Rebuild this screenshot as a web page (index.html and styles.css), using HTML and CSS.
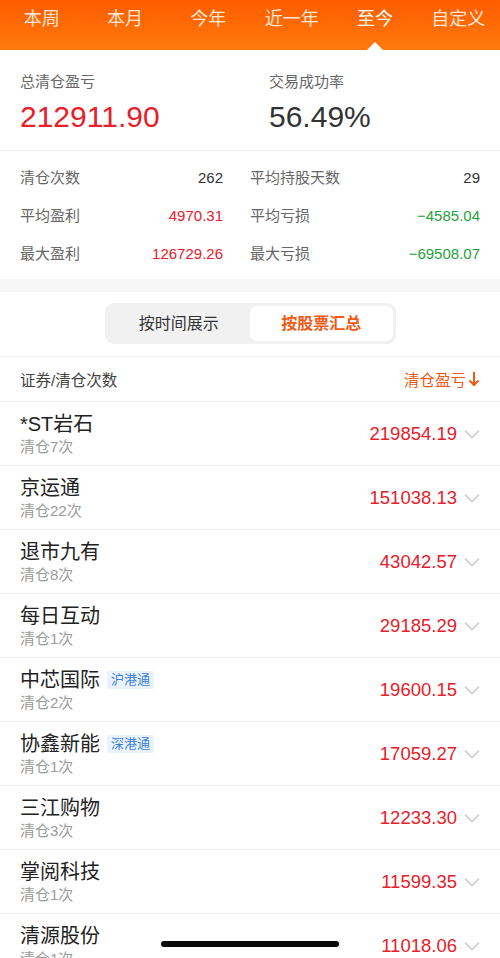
FILE: index.html
```html
<!DOCTYPE html>
<html lang="zh">
<head>
  <meta charset="UTF-8">
  <title>清仓盈亏</title>
  <link rel="stylesheet" href="styles.css">
</head>
<body>
  <nav class="tabs">
    <span class="tab">本周</span>
    <span class="tab">本月</span>
    <span class="tab">今年</span>
    <span class="tab">近一年</span>
    <span class="tab actif">至今</span>
    <span class="tab">自定义</span>
  </nav>

  <section class="resume">
    <div class="bloc">
      <div class="etiquette">总清仓盈亏</div>
      <div class="grand rouge">212911.90</div>
    </div>
    <div class="bloc">
      <div class="etiquette">交易成功率</div>
      <div class="grand">56.49%</div>
    </div>
  </section>

  <section class="stats">
    <span class="lib">清仓次数</span><span class="val">262</span>
    <span class="lib">平均持股天数</span><span class="val">29</span>
    <span class="lib">平均盈利</span><span class="val rouge">4970.31</span>
    <span class="lib">平均亏损</span><span class="val vert">−4585.04</span>
    <span class="lib">最大盈利</span><span class="val rouge">126729.26</span>
    <span class="lib">最大亏损</span><span class="val vert">−69508.07</span>
  </section>

  <div class="separation"></div>

  <div class="segment-zone">
    <div class="segment">
      <span class="seg">按时间展示</span>
      <span class="seg actif">按股票汇总</span>
    </div>
  </div>

  <div class="entete">
    <span>证券/清仓次数</span>
    <span class="tri">清仓盈亏<svg width="12" height="16" viewBox="0 0 12 16"><path d="M6 1v13M1.5 9.5L6 14l4.5-4.5" fill="none" stroke="#f05a14" stroke-width="2"/></svg></span>
  </div>

  <ul id="liste" class="liste"></ul>

  <div class="indicateur"></div>

  <script>
    const actions = [
      { nom: "*ST岩石", fois: 7, pl: "219854.19" },
      { nom: "京运通", fois: 22, pl: "151038.13" },
      { nom: "退市九有", fois: 8, pl: "43042.57" },
      { nom: "每日互动", fois: 1, pl: "29185.29" },
      { nom: "中芯国际", fois: 2, pl: "19600.15", badge: "沪港通" },
      { nom: "协鑫新能", fois: 1, pl: "17059.27", badge: "深港通" },
      { nom: "三江购物", fois: 3, pl: "12233.30" },
      { nom: "掌阅科技", fois: 1, pl: "11599.35" },
      { nom: "清源股份", fois: 1, pl: "11018.06" }
    ];

    const liste = document.getElementById("liste");
    actions.forEach(a => {
      const badge = a.badge ? `<span class="badge">${a.badge}</span>` : "";
      liste.innerHTML += `
        <li class="ligne">
          <div class="gauche">
            <div class="nom">${a.nom}${badge}</div>
            <div class="fois">清仓${a.fois}次</div>
          </div>
          <div class="droite">
            <span class="pl">${a.pl}</span>
            <svg class="chevron" width="16" height="10" viewBox="0 0 16 10"><path d="M1 1.5l7 7 7-7" fill="none" stroke="#c8c8c8" stroke-width="1.4"/></svg>
          </div>
        </li>
      `;
    });
  </script>
</body>
</html>
```

FILE: styles.css
```css
body {
  margin: 0;
  height: 958px;
  overflow: hidden;
  background: #fff;
  color: #333;
  font-family: 'Liberation Sans', 'Noto Sans CJK SC', sans-serif;
}
.rouge { color: #e8202a; }
.vert { color: #1fa33a; }

.tabs {
  display: grid;
  grid-template-columns: repeat(6, 1fr);
  height: 50px;
  background: linear-gradient(180deg, #ff5c00, #ff7a0c);
}
.tab {
  position: relative;
  text-align: center;
  color: #ffe6d4;
  font-size: 18px;
  line-height: 38px;
}
.tab.actif { color: #fff; }
.tab.actif::after {
  content: "";
  position: absolute;
  left: 50%;
  bottom: 0;
  margin-left: -8px;
  border: 8px solid transparent;
  border-bottom-color: #fff;
  border-top-width: 0;
}

.resume {
  display: grid;
  grid-template-columns: 249px 1fr;
  padding: 21px 20px 0;
  height: 79px;
  border-bottom: 1px solid #eee;
}
.etiquette {
  font-size: 15px;
  color: #666;
  line-height: 22px;
}
.grand {
  font-size: 30px;
  line-height: 36px;
  margin-top: 6px;
}

.stats {
  display: grid;
  grid-template-columns: 120px 83px 157px 100px;
  padding: 8px 20px 6px;
  font-size: 15px;
  line-height: 38px;
}
.stats .lib { color: #666; white-space: nowrap; }
.stats .val { text-align: right; }
.stats .lib:nth-child(4n+3) { padding-left: 27px; }

.separation {
  height: 13px;
  background: #f6f6f6;
}

.segment-zone {
  display: flex;
  justify-content: center;
  padding: 11px 0 12px;
  border-bottom: 1px solid #f0f0f0;
}
.segment {
  display: flex;
  width: 285px;
  padding: 3px;
  background: #f1f1f1;
  border-radius: 9px;
}
.seg {
  flex: 1;
  text-align: center;
  font-size: 16px;
  line-height: 35px;
  color: #333;
}
.seg.actif {
  background: #fff;
  border-radius: 7px;
  color: #f05a14;
  font-weight: bold;
}

.entete {
  display: flex;
  justify-content: space-between;
  align-items: center;
  height: 44px;
  padding: 0 20px;
  font-size: 15.5px;
  color: #444;
  border-bottom: 1px solid #f0f0f0;
}
.entete .tri {
  display: flex;
  align-items: center;
  gap: 2px;
  color: #f05a14;
}

.liste {
  list-style: none;
  margin: 0;
  padding: 0;
}
.ligne {
  display: flex;
  justify-content: space-between;
  align-items: center;
  height: 63px;
  padding: 0 20px;
  border-bottom: 1px solid #f0f0f0;
}
.nom {
  display: flex;
  align-items: center;
  font-size: 20px;
  line-height: 26px;
  color: #222;
}
.fois {
  font-size: 15px;
  line-height: 20px;
  color: #999;
}
.badge {
  margin-left: 7px;
  padding: 0 4px;
  font-size: 13px;
  line-height: 18px;
  color: #3a7fd8;
  background: #eaf3fd;
  border-radius: 2px;
}
.droite {
  display: flex;
  align-items: center;
  gap: 7px;
}
.pl {
  font-size: 18.5px;
  color: #e8202a;
}

.indicateur {
  position: fixed;
  left: 161px;
  bottom: 11px;
  width: 178px;
  height: 6px;
  border-radius: 3px;
  background: #0a0a0a;
}
```
